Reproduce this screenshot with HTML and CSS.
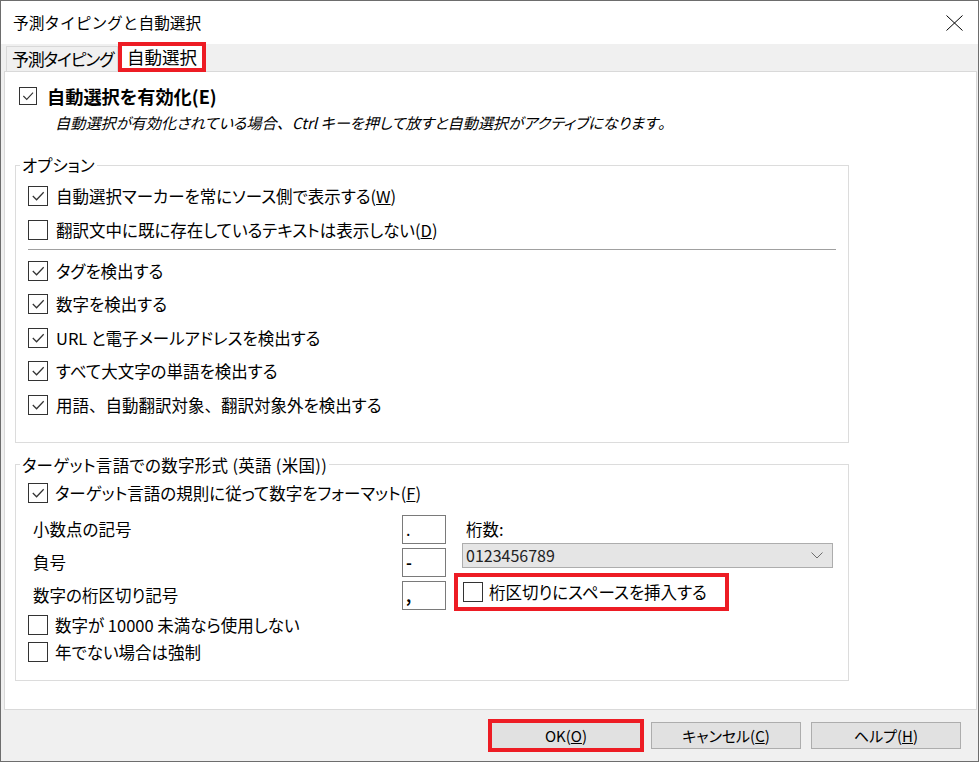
FILE: index.html
```html
<!DOCTYPE html>
<html lang="ja">
<head>
    <meta charset="UTF-8">
    <title>予測タイピングと自動選択</title>
    <link rel="stylesheet" href="styles.css">
</head>
<body>
    <div class="window">
        <header class="titlebar">
            <span class="title">予測タイピングと自動選択</span>
            <svg class="close" viewBox="0 0 17 16" width="17" height="16">
                <path d="M0.5 0.5 L16.5 15.5 M16.5 0.5 L0.5 15.5" stroke="#000" stroke-width="1" fill="none"/>
            </svg>
        </header>

        <div class="tabs">
            <div class="tab">予測タイピング</div>
            <div class="tab active">自動選択</div>
        </div>

        <main class="panel">
            <div class="enable">
                <span class="cb on big"><svg viewBox="0 0 19 19"><path d="M4 9.5 L8 13.5 L15.5 5.5"/></svg></span>
                <b>自動選択を有効化(E)</b>
            </div>
            <p class="hint">自動選択が有効化されている場合<span class="fw">、</span>Ctrl キーを押して放すと自動選択がアクティブになります<span class="fw">。</span></p>

            <fieldset class="group options">
                <legend>オプション</legend>
                <div class="group-body">
                    <div class="opt tall">
                        <span class="cb on"><svg viewBox="0 0 19 19"><path d="M4 9.5 L8 13.5 L15.5 5.5"/></svg></span>
                        <span>自動選択マーカーを常にソース側で表示する(<u>W</u>)</span>
                    </div>
                    <div class="opt tall">
                        <span class="cb"></span>
                        <span>翻訳文中に既に存在しているテキストは表示しない(<u>D</u>)</span>
                    </div>
                    <div class="sep"></div>
                    <div class="opt">
                        <span class="cb on"><svg viewBox="0 0 19 19"><path d="M4 9.5 L8 13.5 L15.5 5.5"/></svg></span>
                        <span>タグを検出する</span>
                    </div>
                    <div class="opt">
                        <span class="cb on"><svg viewBox="0 0 19 19"><path d="M4 9.5 L8 13.5 L15.5 5.5"/></svg></span>
                        <span>数字を検出する</span>
                    </div>
                    <div class="opt">
                        <span class="cb on"><svg viewBox="0 0 19 19"><path d="M4 9.5 L8 13.5 L15.5 5.5"/></svg></span>
                        <span>URL と電子メールアドレスを検出する</span>
                    </div>
                    <div class="opt">
                        <span class="cb on"><svg viewBox="0 0 19 19"><path d="M4 9.5 L8 13.5 L15.5 5.5"/></svg></span>
                        <span>すべて大文字の単語を検出する</span>
                    </div>
                    <div class="opt">
                        <span class="cb on"><svg viewBox="0 0 19 19"><path d="M4 9.5 L8 13.5 L15.5 5.5"/></svg></span>
                        <span>用語<span class="fw">、</span>自動翻訳対象<span class="fw">、</span>翻訳対象外を検出する</span>
                    </div>
                </div>
            </fieldset>

            <fieldset class="group numbers">
                <legend>ターゲット言語での数字形式 (英語 (米国))</legend>
                <div class="group-body">
                    <div class="opt format">
                        <span class="cb on"><svg viewBox="0 0 19 19"><path d="M4 9.5 L8 13.5 L15.5 5.5"/></svg></span>
                        <span>ターゲット言語の規則に従って数字をフォーマット(<u>F</u>)</span>
                    </div>

                    <div class="symbols">
                        <span class="sym-label">小数点の記号</span>
                        <input class="sym-box light" type="text" value="." readonly>
                        <div class="digits">
                            <span class="digits-label">桁数:</span>
                            <div class="combo">
                                <span>0123456789</span>
                                <svg viewBox="0 0 12 7" width="12" height="7"><path d="M0.5 0.5 L6 6 L11.5 0.5" stroke="#6d6d6d" fill="none"/></svg>
                            </div>
                            <div class="marked opt">
                                <span class="cb"></span>
                                <span>桁区切りにスペースを挿入する</span>
                            </div>
                        </div>
                        <span class="sym-label">負号</span>
                        <input class="sym-box" type="text" value="-" readonly>
                        <span class="sym-label">数字の桁区切り記号</span>
                        <input class="sym-box" type="text" value="," readonly>
                    </div>

                    <div class="opt short">
                        <span class="cb"></span>
                        <span>数字が 10000 未満なら使用しない</span>
                    </div>
                    <div class="opt short">
                        <span class="cb"></span>
                        <span>年でない場合は強制</span>
                    </div>
                </div>
            </fieldset>
        </main>

        <footer class="buttons">
            <button class="btn default">OK(<u>O</u>)</button>
            <button class="btn">キャンセル(<u>C</u>)</button>
            <button class="btn">ヘルプ(<u>H</u>)</button>
        </footer>
    </div>
</body>
</html>
```

FILE: styles.css
```css
* {
    margin: 0;
    padding: 0;
    box-sizing: border-box;
}

html, body {
    width: 100%;
    height: 100%;
    background-color: #f0f0f0;
}

body {
    font-family: "Noto Sans CJK JP", "Noto Sans", sans-serif;
    color: #000;
}

.window {
    width: 979px;
    height: 762px;
    border: 1px solid #6d6d6d;
    background: #f0f0f0;
    display: flex;
    flex-direction: column;
}

/* title bar */
.titlebar {
    height: 43px;
    flex: none;
    background: #fff;
    display: flex;
    align-items: center;
    justify-content: space-between;
    padding: 0 15px 0 12px;
    font-size: 15.7px;
}

/* tabs */
.tabs {
    height: 27px;
    flex: none;
    display: flex;
    align-items: flex-end;
    padding-left: 5px;
    font-size: 17px;
    font-feature-settings: "palt";
}

.tab {
    height: 25px;
    line-height: 24px;
    padding: 0 4px 0 5px;
    border: 1px solid #d9d9d9;
    border-bottom: none;
    white-space: nowrap;
    letter-spacing: -1.3px;
}

.tab.active {
    position: relative;
    z-index: 1;
    height: 30px;
    line-height: 22px;
    margin-bottom: -1px;
    padding: 0 5px;
    background: #fff;
    border: 4px solid #ed1c24;
    font-size: 17.5px;
    letter-spacing: 0;
}

/* main panel */
.panel {
    height: 639px;
    flex: none;
    margin: 0 1px 0 3px;
    background: #fff;
    border: 1px solid #d9d9d9;
    padding: 12px 0 0 0;
    font-size: 16.5px;
    font-feature-settings: "palt";
}

.fw {
    font-feature-settings: normal;
}

.enable {
    height: 24px;
    display: flex;
    align-items: center;
    gap: 10px;
    padding-left: 14px;
    font-size: 18.2px;
}

.hint {
    margin: 4px 0 0 50px;
    line-height: 20px;
    font-size: 15.2px;
    font-style: italic;
    white-space: nowrap;
}

.group {
    width: 834px;
    margin: 23px 0 0 10px;
    border: 1px solid #dcdcdc;
    min-width: 0;
}

.group.numbers {
    margin-top: 12px;
}

.group legend {
    margin-left: 4px;
    padding: 0 2px;
    line-height: 20px;
}

.numbers legend {
    letter-spacing: 0.3px;
}

.options .group-body {
    padding: 4px 12px 20px;
}

.numbers .group-body {
    padding: 3px 12px 14px;
}

/* checkbox rows */
.opt {
    height: 33.5px;
    display: flex;
    align-items: center;
    gap: 8px;
    white-space: nowrap;
}

.opt.tall {
    height: 34px;
}

.opt.format {
    height: 30px;
    gap: 7px;
}

.opt.short {
    height: 27px;
    gap: 7px;
}

.sep {
    height: 1px;
    background: #a0a0a0;
    margin: 2px 0 4px;
}

.cb {
    width: 20px;
    height: 20px;
    flex: none;
    border: 1px solid #333;
    background: #fff;
}

.cb.big {
    width: 18px;
    height: 18px;
}

.cb svg {
    display: block;
    width: 100%;
    height: 100%;
    fill: none;
    stroke: #333;
    stroke-width: 1.3;
}

/* number symbols */
.symbols {
    margin-top: 5px;
    display: grid;
    grid-template-columns: 374px 44px 1fr;
    grid-template-rows: repeat(3, 33px);
    align-items: center;
}

.sym-label {
    padding-left: 5px;
    grid-column: 1;
}

.sym-box {
    grid-column: 2;
    width: 44px;
    height: 29px;
    border: 1px solid #7a7a7a;
    padding: 0 3px;
    font-family: inherit;
    font-size: 16px;
    font-weight: bold;
    background: #fff;
    color: #000;
    outline: none;
}

.sym-box.light {
    font-weight: normal;
}

.digits {
    grid-column: 3;
    grid-row: 1 / 4;
    align-self: stretch;
    margin-left: 16px;
    padding-top: 6px;
    display: flex;
    flex-direction: column;
}

.digits-label {
    line-height: 20px;
    padding-left: 4px;
}

.combo {
    margin-top: 4px;
    width: 371px;
    height: 25px;
    border: 1px solid #adadad;
    background: #e5e5e5;
    display: flex;
    align-items: center;
    justify-content: space-between;
    padding: 0 9px 0 3px;
    font-size: 16px;
    color: #222;
}

.marked.opt {
    margin: 5px 0 0 -8px;
    width: 275px;
    height: 38px;
    border: 4px solid #ed1c24;
    padding-left: 5px;
    gap: 6px;
}

/* footer buttons */
.buttons {
    flex: 1;
    display: flex;
    justify-content: flex-end;
    align-items: flex-start;
    gap: 10px;
    padding: 12px 17px 0 0;
}

.btn {
    width: 150px;
    height: 27px;
    border: 1px solid #adadad;
    background: #e1e1e1;
    font-family: inherit;
    font-size: 15px;
    color: #000;
    font-feature-settings: "palt";
}

.btn.default {
    border-color: #0078d7;
    outline: 4px solid #ed1c24;
    outline-offset: -1px;
}
```
